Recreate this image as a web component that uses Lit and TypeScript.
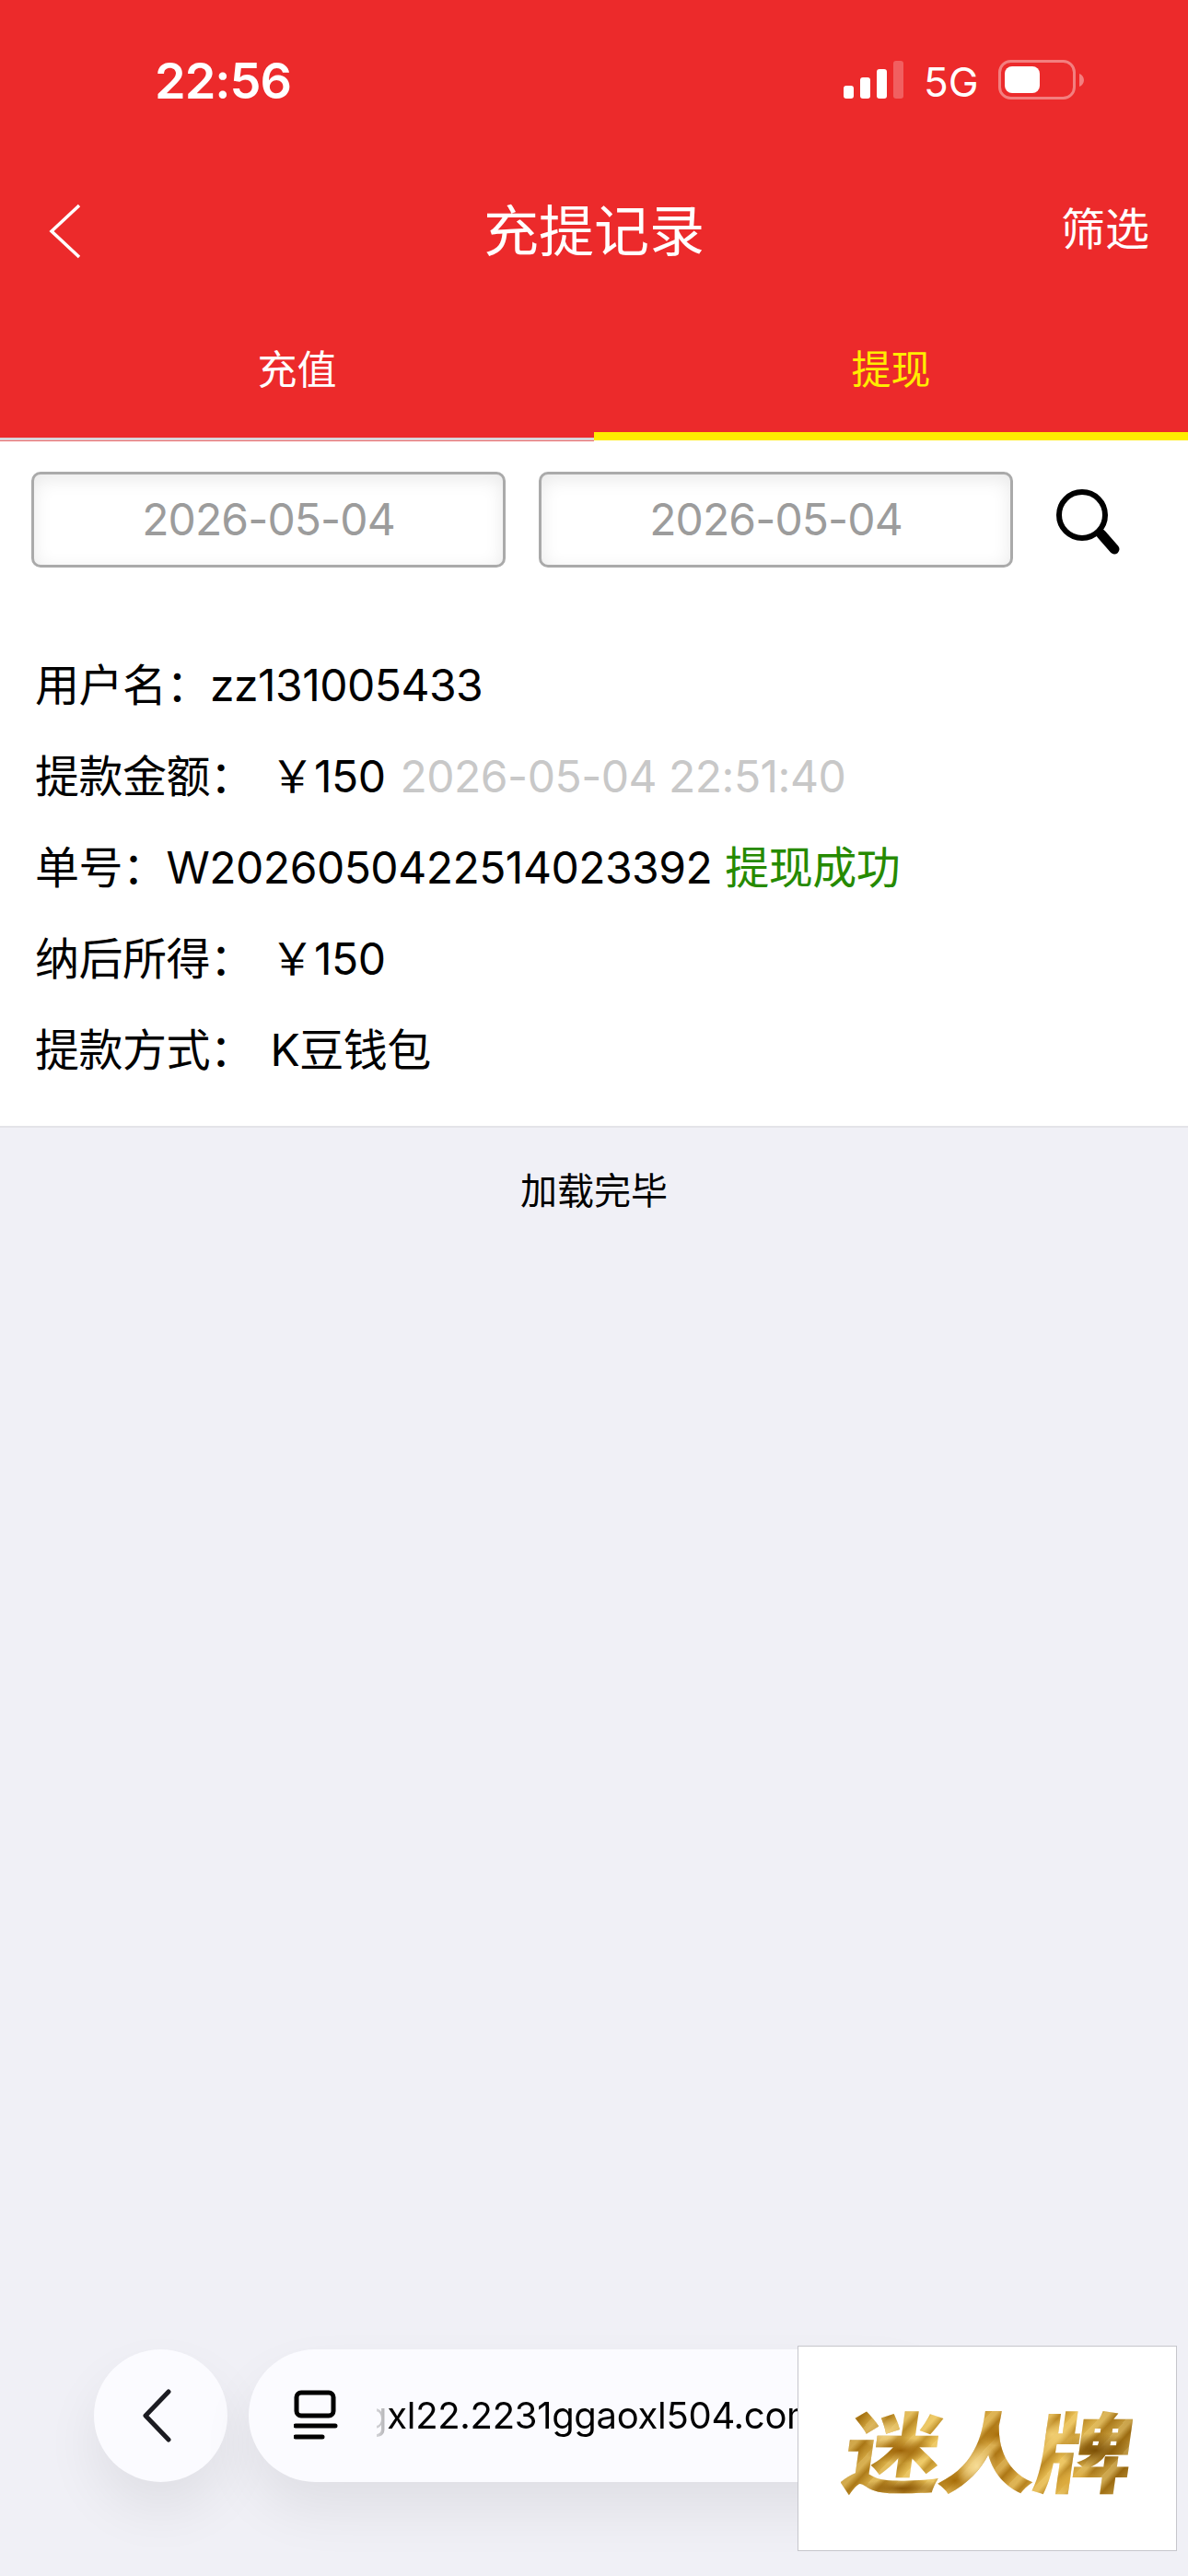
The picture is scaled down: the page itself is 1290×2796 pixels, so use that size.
import { LitElement, html, css } from "lit";
import { customElement } from "lit/decorators.js";

@customElement("app-root")
export class AppRoot extends LitElement {
  static styles = css`
    :host { display: block; width: 1290px; height: 2796px; background: #f0f0f6; font-family: Inter, "Noto Sans CJK SC", sans-serif; position: relative; overflow: hidden; color: #000; }
    .head { background: #ec2a2b; color: #fff; height: 478px; display: flex; flex-direction: column; }
    .status { height: 176px; display: flex; align-items: flex-start; box-sizing: border-box; padding: 60px 0 0 168px; }
    .time { font-size: 54px; line-height: 56px; font-weight: 600; width: 748px; letter-spacing: -1px; }
    .sig { display: flex; align-items: flex-end; gap: 7px; height: 41px; margin-top: 6px; }
    .sig i { display: block; width: 11px; border-radius: 3px; background: #fff; }
    .sig .b1 { height: 14px; }
    .sig .b2 { height: 23px; }
    .sig .b3 { height: 32px; }
    .sig .b4 { height: 41px; opacity: .25; }
    .fiveg { font-size: 44px; line-height: 44px; margin: 7px 0 0 22px; width: 61px; }
    .batt { margin: 5px 0 0 20px; }
    .nav { height: 150px; display: grid; grid-template-columns: 1fr auto 1fr; align-items: center; }
    .back { padding-left: 50px; display: flex; }
    .title { font-size: 60px; line-height: 64px; }
    .filter { justify-self: end; font-size: 48px; line-height: 56px; padding-right: 42px; margin-bottom: 4px; }
    .tabs { flex: 1; display: flex; align-items: stretch; }
    .tab { flex: 1; display: flex; justify-content: center; box-sizing: border-box; font-size: 43px; line-height: 48px; padding-top: 51px; border-bottom: 3px solid #d8d4d8; position: relative; }
    .tab::after { content: ""; position: absolute; left: 0; right: 0; bottom: -4px; height: 1px; background: #ee6a6a; }
    .tab.on { color: #ffec00; border-bottom: 9px solid #ffec00; }
    .tab.on::after { display: none; }
    .panel { background: #fff; height: 744px; border-bottom: 2px solid #e4e4e8; }
    .search { display: flex; align-items: center; padding: 34px 0 0 34px; gap: 36px; }
    .date { width: 515px; height: 104px; box-sizing: border-box; border: 3px solid #aaa; border-radius: 10px; text-align: center; color: #9c9c9c; font-size: 48px; line-height: 98px; letter-spacing: -0.9px; box-shadow: inset 0 5px 20px rgba(0,0,0,0.09); }
    .mag { margin-left: 10px; display: flex; }
    .rows { padding: 78px 0 0 38px; font-size: 48px; letter-spacing: -0.5px; }
    .row { height: 99px; line-height: 99px; white-space: nowrap; display: flex; }
    .val { margin-left: 5px; }
    .gray { color: #c8c8c8; margin-left: 16px; }
    .green { color: #268a00; margin-left: 14px; }
    .done { text-align: center; font-size: 40px; line-height: 50px; padding-top: 44px; }
    .bottom { position: absolute; left: 0; top: 2550px; width: 1290px; height: 144px; }
    .circle { position: absolute; left: 102px; top: 0; width: 145px; height: 144px; border-radius: 50%; background: #fbfbff; box-shadow: 0 30px 60px rgba(0,0,0,0.07); display: flex; align-items: center; justify-content: center; }
    .pill { position: absolute; left: 270px; top: 0; width: 760px; height: 144px; border-radius: 72px; background: #fbfbff; box-shadow: 0 30px 60px rgba(0,0,0,0.07); display: flex; align-items: center; padding-left: 49px; box-sizing: border-box; font-size: 40px; letter-spacing: -0.3px; }
    .url { width: 457px; overflow: hidden; white-space: nowrap; margin-left: 40px; line-height: 50px; flex: none; text-indent: -13px; -webkit-mask-image: linear-gradient(90deg, rgba(0,0,0,.15) 0, rgba(0,0,0,.3) 10px, #000 13px); mask-image: linear-gradient(90deg, rgba(0,0,0,.15) 0, rgba(0,0,0,.3) 10px, #000 13px); }
    .ad { position: absolute; left: 866px; top: 2546px; width: 412px; height: 223px; background: #fff; border: 1.5px solid #c6c6cc; box-sizing: border-box; display: flex; align-items: center; justify-content: center; }
    .logo { font-size: 110px; line-height: 110px; font-weight: 900; letter-spacing: -3px; white-space: nowrap; transform: skewX(-8deg) scale(.97, .86); background-color: #c08a1c;
      background-image:
        radial-gradient(ellipse 40px 16px at 62px 50px, #9c6206 0%, transparent 100%),
        radial-gradient(ellipse 24px 20px at 40px 28px, #f2d488 0%, transparent 100%),
        radial-gradient(ellipse 50px 12px at 70px 98px, #8a5606 0%, transparent 100%),
        radial-gradient(ellipse 22px 30px at 150px 70px, #f6dc96 0%, transparent 100%),
        radial-gradient(ellipse 24px 20px at 128px 88px, #a66c08 0%, transparent 100%),
        radial-gradient(ellipse 20px 14px at 170px 30px, #a66c08 0%, transparent 100%),
        radial-gradient(ellipse 26px 20px at 230px 30px, #f0cd72 0%, transparent 100%),
        radial-gradient(ellipse 40px 22px at 280px 50px, #7c5006 0%, transparent 100%),
        radial-gradient(ellipse 30px 18px at 260px 90px, #dca93a 0%, transparent 100%),
        repeating-linear-gradient(125deg, rgba(255,235,170,.35) 0 6px, rgba(120,70,0,.3) 14px, rgba(255,235,170,.2) 26px),
        linear-gradient(100deg, #b07a10 0%, #e8bc48 30%, #c0861a 55%, #e4b440 75%, #98680c 100%);
      -webkit-background-clip: text; background-clip: text; color: transparent; margin-top: 12px; }
  `;

  render() {
    return html`
      <div class="head">
        <div class="status">
          <div class="time">22:56</div>
          <div class="sig"><i class="b1"></i><i class="b2"></i><i class="b3"></i><i class="b4"></i></div>
          <div class="fiveg">5G</div>
          <svg class="batt" width="94" height="44" viewBox="0 0 94 44">
            <rect x="1.5" y="1.5" width="81" height="40" rx="12" fill="none" stroke="#fff" stroke-opacity=".4" stroke-width="3"/>
            <rect x="7" y="7" width="38" height="29" rx="8" fill="#fff"/>
            <path d="M88 15c3 1 5 4 5 7s-2 6-5 7z" fill="#fff" fill-opacity=".4"/>
          </svg>
        </div>
        <div class="nav">
          <div class="back">
            <svg width="40" height="62" viewBox="0 0 40 62"><path d="M36 3 6 31l30 28" fill="none" stroke="#fff" stroke-width="3.5"/></svg>
          </div>
          <div class="title">充提记录</div>
          <div class="filter">筛选</div>
        </div>
        <div class="tabs">
          <div class="tab">充值</div>
          <div class="tab on">提现</div>
        </div>
      </div>
      <div class="panel">
        <div class="search">
          <div class="date">2026-05-04</div>
          <div class="date">2026-05-04</div>
          <div class="mag">
            <svg width="76" height="76" viewBox="0 0 76 76">
              <circle cx="29" cy="33" r="25" fill="none" stroke="#000" stroke-width="6"/>
              <path d="M50 54 64 70" stroke="#000" stroke-width="11" stroke-linecap="round"/>
            </svg>
          </div>
        </div>
        <div class="rows">
          <div class="row"><span>用户名：zz131005433</span></div>
          <div class="row"><span>提款金额：&nbsp;</span><span class="val">￥150</span><span class="gray">2026-05-04 22:51:40</span></div>
          <div class="row"><span>单号：W2026050422514023392</span><span class="green">提现成功</span></div>
          <div class="row"><span>纳后所得：&nbsp;</span><span class="val">￥150</span></div>
          <div class="row"><span>提款方式：&nbsp;</span><span class="val">K豆钱包</span></div>
        </div>
      </div>
      <div class="done">加载完毕</div>
      <div class="bottom">
        <div class="circle">
          <svg width="40" height="60" viewBox="0 0 40 60"><path d="M28 4 3 30l25 26" fill="none" stroke="#1c1c22" stroke-width="5" stroke-linecap="round" stroke-linejoin="round"/></svg>
        </div>
        <div class="pill">
          <svg width="50" height="56" viewBox="0 0 50 56">
            <rect x="3" y="3" width="40" height="25" rx="5" fill="none" stroke="#000" stroke-width="5"/>
            <path d="M2 39h43M2 51h29" stroke="#000" stroke-width="5" stroke-linecap="round"/>
          </svg>
          <div class="url">gxl22.2231ggaoxl504.com</div>
        </div>
      </div>
      <div class="ad"><div class="logo">迷人牌</div></div>
    `;
  }
}
